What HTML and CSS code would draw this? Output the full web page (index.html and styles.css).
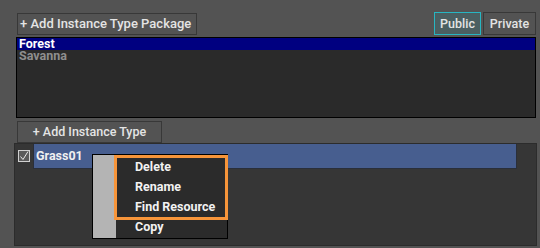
FILE: index.html
```html
<!DOCTYPE html>
<html lang="en">
<head>
  <meta charset="UTF-8">
  <title>Instance Types</title>
  <link rel="stylesheet" href="styles.css">
</head>
<body>
  <div class="toolbar">
    <button class="btn">+ Add Instance Type Package</button>
    <div class="toggle">
      <button class="btn tab active">Public</button>
      <button class="btn tab">Private</button>
    </div>
  </div>

  <ul class="packages">
    <li class="selected">Forest</li>
    <li>Savanna</li>
  </ul>

  <button class="btn add-type">+ Add Instance Type</button>

  <div class="types">
    <div class="type-row">
      <span class="check">
        <svg width="12" height="12" viewBox="0 0 12 12">
          <rect x="0.5" y="0.5" width="11" height="11" fill="#5a5a5a" stroke="#d0d0d0"/>
          <path d="M2.5 6.5 L5 9.5 L10 1.5" fill="none" stroke="#e8e8e8" stroke-width="1"/>
        </svg>
      </span>
      <div class="type-name">Grass01</div>
    </div>

    <div class="menu">
      <div class="gutter"></div>
      <ul class="items">
        <li>Delete</li>
        <li>Rename</li>
        <li>Find Resource</li>
        <li>Copy</li>
      </ul>
      <div class="highlight"></div>
    </div>
  </div>
</body>
</html>
```

FILE: styles.css
```css
* {
  box-sizing: border-box;
  margin: 0;
  padding: 0;
}
body {
  background-color: #535353;
  color: #e2e2e2;
  font-family: Roboto, 'Noto Sans', sans-serif;
  font-size: 12.5px;
  width: 540px;
  height: 248px;
  overflow: hidden;
}
ul {
  list-style: none;
}
.btn {
  background-color: #535353;
  color: #e4e4e4;
  border: 1px solid #383838;
  font-family: inherit;
  font-size: 12.5px;
  font-weight: 500;
  line-height: 18px;
  padding: 1px 2px;
  white-space: nowrap;
}
.toolbar {
  display: flex;
  justify-content: space-between;
  align-items: flex-start;
  padding: 12px 4px 0 17px;
  height: 37px;
}
.toolbar > .btn {
  margin-top: 1px;
  height: 22px;
  width: 180px;
  font-size: 13px;
  text-align: left;
}
.toggle {
  display: flex;
  gap: 2px;
}
.tab {
  height: 23px;
  padding: 1px 4px;
}
.tab:first-child {
  width: 47px;
}
.tab:last-child {
  width: 53px;
}
.tab.active {
  background-color: #4b5f61;
  border-color: #27b6c2;
}
.packages {
  margin: 0 4px 0 16px;
  height: 81px;
  background-color: #2a2a2a;
  border: 1px solid #000;
  font-weight: 700;
  line-height: 12px;
}
.packages li {
  height: 12px;
  padding-left: 2px;
  color: #8e8e8e;
}
.packages li.selected {
  background-color: #000080;
  color: #fff;
}
.add-type {
  display: block;
  margin: 3px 0 0 17px;
  height: 22px;
  width: 145px;
  text-align: center;
}
.types {
  position: relative;
  margin: 0 3px 0 14px;
  height: 103px;
  background-color: #363636;
  border: 1px solid #2c2c2c;
}
.type-row {
  display: flex;
  align-items: flex-start;
  gap: 3px;
  padding: 0 19px 0 3px;
}
.check {
  display: flex;
  margin-top: 6px;
}
.type-name {
  flex: 1;
  height: 25px;
  background-color: #475e8f;
  border: 1px solid #2a2f3a;
  border-top: none;
  padding: 4px 2px;
  font-weight: 700;
  color: #f0f0f0;
}
.menu {
  position: absolute;
  left: 77px;
  top: 10px;
  width: 136px;
  height: 85px;
  display: flex;
  background-color: #2b2b2b;
  border: 1px solid #000;
}
.gutter {
  width: 23px;
  background-color: #b4b4b4;
}
.items {
  padding: 2px 0 0 19px;
  font-weight: 700;
  color: #f2f2f2;
}
.items li {
  height: 20px;
  line-height: 20px;
}
.highlight {
  position: absolute;
  left: 21px;
  top: 0;
  width: 114px;
  height: 65px;
  border: 3px solid #f7953a;
}
```
